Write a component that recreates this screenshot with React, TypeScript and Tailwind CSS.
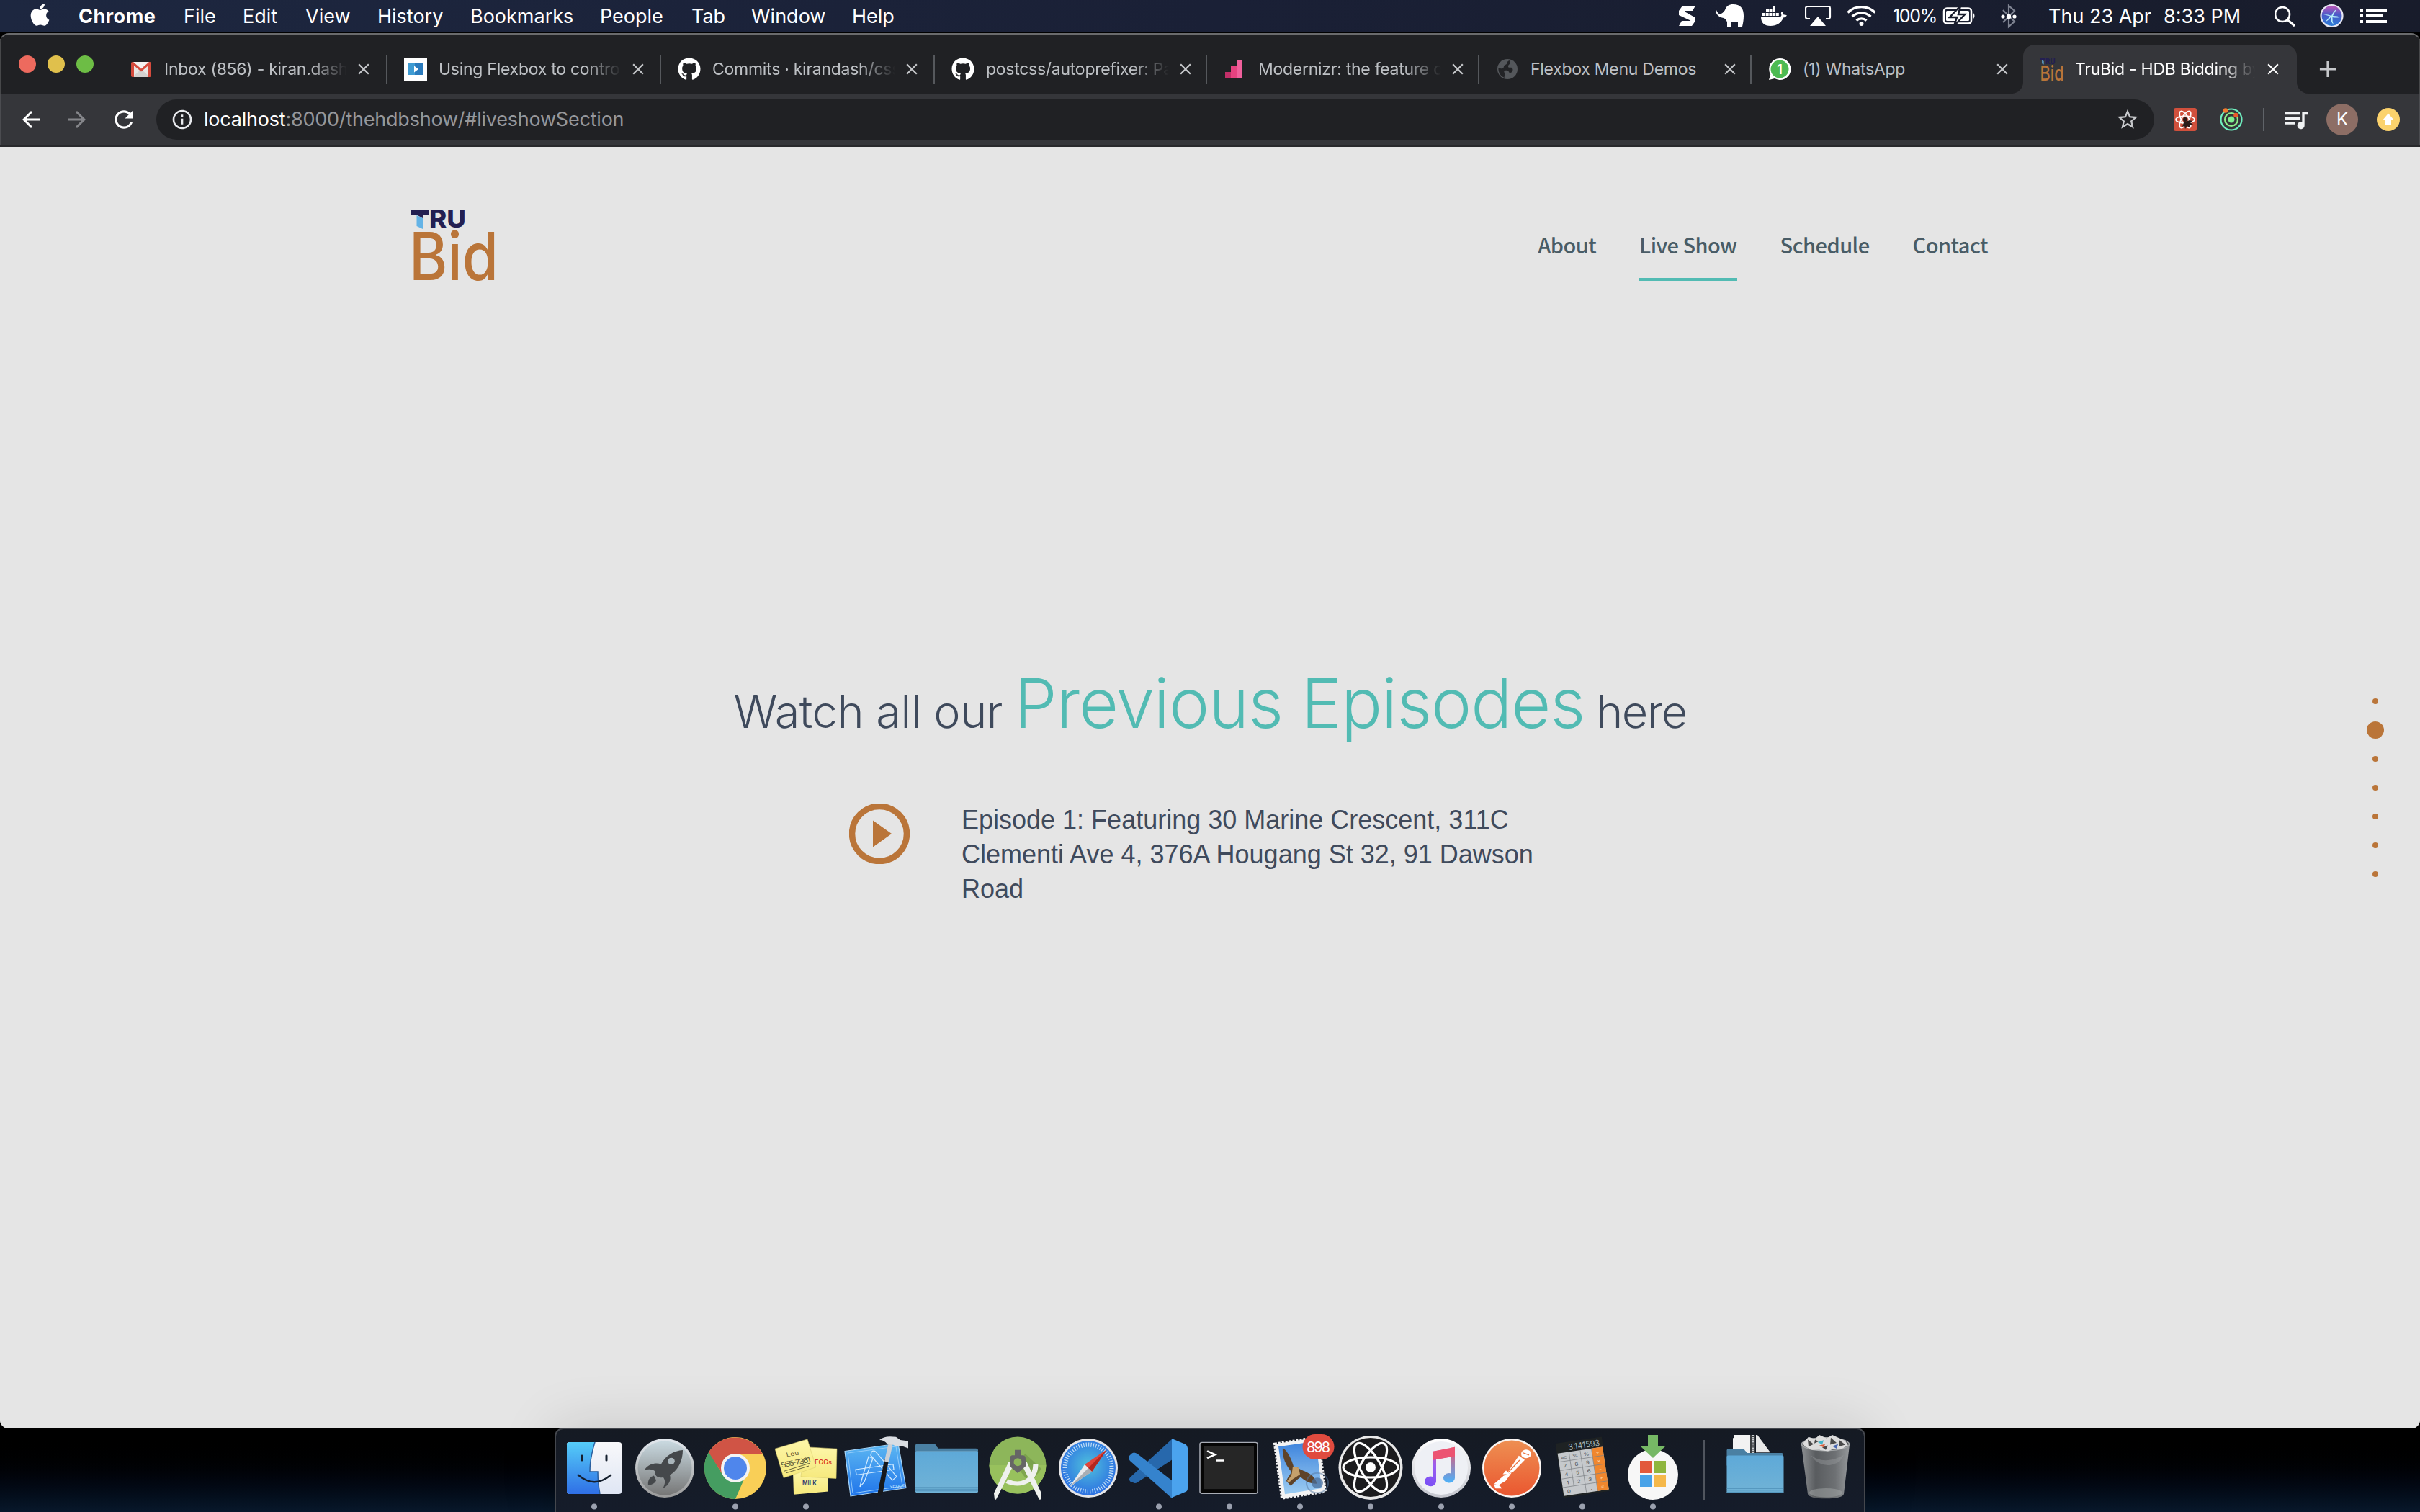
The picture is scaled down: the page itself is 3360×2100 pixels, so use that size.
import type { ReactNode } from 'react';
import { FaApple, FaGithub } from 'react-icons/fa';
import { MdArrowBack, MdArrowForward, MdClose, MdAdd, MdInfoOutline, MdQueueMusic, MdRefresh, MdStarBorder } from 'react-icons/md';

/* ---------- macOS menu bar ---------- */

const menus = [
  { label: 'Chrome', cls: 'w-[146px] font-bold tracking-[0.500px]' },
  { label: 'File', cls: 'w-[82px]' },
  { label: 'Edit', cls: 'w-[87px]' },
  { label: 'View', cls: 'w-[100px]' },
  { label: 'History', cls: 'w-[129px]' },
  { label: 'Bookmarks', cls: 'w-[180px]' },
  { label: 'People', cls: 'w-[127px]' },
  { label: 'Tab', cls: 'w-[83px]' },
  { label: 'Window', cls: 'w-[140px]' },
  { label: 'Help', cls: 'w-[80px]' },
];

function Glyph({ w, children }: { w: number; children: ReactNode }) {
  return (
    <svg width={w} height={44} viewBox={`0 0 ${w} 44`} className="shrink-0" fill="white">
      {children}
    </svg>
  );
}

function MenuBar() {
  return (
    <div className="flex h-11 shrink-0 items-center justify-between bg-linear-to-r from-[#1d2740] via-[#1a2036] to-[#181c2b] text-[27px] leading-none text-white">
      <div className="flex items-center">
        <FaApple className="-mt-1 mr-[25px] ml-9 size-[35px] w-12 pr-[9px]" />
        {menus.map((m) => (
          <span key={m.label} className={`shrink-0 whitespace-nowrap ${m.cls}`}>
            {m.label}
          </span>
        ))}
      </div>
      <div className="flex items-center">
        <Glyph w={51}>
          <path d="M5 8H23L19 15H9L5 19H0V15Z" />
          <path d="M0 15H6L22 24V29H17L0 21Z" />
          <path d="M17 26H23V29L18 36H0L4 29H16Z" />
        </Glyph>
        <Glyph w={63}>
          <path d="M1 14C5 24 10 18 13 14C15 8 19 6 24 6C36 6 39 13 39 22C39 28 38 32 37 37H31V30H22V37H16V31C15 28 14 26 11 25C5 24 0 20 0 14Z" />
        </Glyph>
        <Glyph w={61}>
          <path d="M16 8H20V12H16ZM7 13H11V17H7ZM11.500 13H15.500V17H11.500ZM16 13H20V17H16ZM2 18H6V22H2ZM6.700 18H10.700V22H6.700ZM11.400 18H15.400V22H11.400ZM16.100 18H20.100V22H16.100ZM20.800 18H24.800V22H20.800Z" />
          <path d="M0 23.500H25Q28 23.500 28.500 21Q27 18 29 16Q31.500 18 31.500 20.500Q34 20 36 21.500Q34.500 24 31 24.500C28 32 22 36 13 36C5 36 0 32 0 23.500Z" />
        </Glyph>
        <Glyph w={58}>
          <path d="M7 26H3.5A2.5 2.5 0 0 1 1 23.500V11.500A2.500 2.500 0 0 1 3.500 9H32.500A2.500 2.500 0 0 1 35 11.500V23.500A2.500 2.500 0 0 1 32.500 26H29" fill="none" stroke="white" strokeWidth="2.200" />
          <path d="M18 23L29 36H7Z" />
        </Glyph>
        <Glyph w={64}>
          <g fill="none" stroke="white" strokeWidth="3.200">
            <path d="M1.500 17.500A27 27 0 0 1 39.500 17.500" />
            <path d="M7.500 23A19 19 0 0 1 33.500 23" />
            <path d="M13.500 28.500A10.500 10.500 0 0 1 27.500 28.500" />
          </g>
          <circle cx="20.500" cy="33" r="3" />
        </Glyph>
        <span className="w-[69px] text-[25px] tracking-[-1.300px]">100%</span>
        <Glyph w={81}>
          <rect x="2" y="11.500" width="38" height="21" rx="4" fill="none" stroke="white" strokeWidth="2.500" />
          <rect x="5" y="15" width="32" height="14" rx="1.500" />
          <path d="M43 18Q46 22 43 26Z" />
          <path d="M25 8L10 24H20L16 36L31 20H22Z" stroke="#191d2d" strokeWidth="2.500" />
        </Glyph>
        <Glyph w={66}>
          <path d="M3 14L19 30L11 37V8L19 15L3 31" fill="none" stroke="#7e8391" strokeWidth="2.200" />
          <circle cx="3" cy="23" r="2.600" />
          <circle cx="11" cy="23" r="3.200" />
          <circle cx="19" cy="23" r="2.600" />
        </Glyph>
        <span className="w-[160px] whitespace-nowrap">Thu 23 Apr</span>
        <span className="w-[154px] whitespace-nowrap">8:33 PM</span>
        <Glyph w={63}>
          <g fill="none" stroke="white" strokeWidth="2.600">
            <circle cx="11" cy="20" r="10" />
            <path d="M18 27.500L28 36" strokeWidth="3.200" />
          </g>
        </Glyph>
        <Glyph w={56}>
          <defs>
            <linearGradient id="siri" x1="0" y1="0" x2="0" y2="1">
              <stop offset="0" stopColor="#c957b8" />
              <stop offset="0.450" stopColor="#4a5ac8" />
              <stop offset="1" stopColor="#2a7fd8" />
            </linearGradient>
          </defs>
          <circle cx="16.500" cy="22" r="15" fill="url(#siri)" stroke="#e6e6f2" strokeWidth="2.200" />
          <path d="M5 20Q12 20 16 22Q19 15 23 13Q20 18 18 22Q25 22 28 24Q21 25 17.500 24Q17 30 19 34Q14.500 30 15 24Q11 29 8 30Q11 26 14 22.500Z" fill="#b9f1fb" />
        </Glyph>
        <Glyph w={83}>
          <path d="M0 12H4V16H0ZM8 12H37V16H8ZM0 20H4V24H0ZM8 20H31V24H8ZM0 28H4V32H0ZM8 28H37V32H8ZM0 28Z" />
        </Glyph>
      </div>
    </div>
  );
}

/* ---------- tab favicons ---------- */

const Gmail = () => (
  <svg viewBox="0 0 32 32" className="size-8">
    <path d="M4 6H28V27H4Z" fill="#e9e7e5" />
    <path d="M4 27L16 16L28 27Z" fill="#d4d2d0" />
    <path d="M4 6L16 17L28 6" fill="#f4f2f1" />
    <path d="M2 8Q2 6 4 6H5L16 15.500L27 6H28Q30 6 30 8V25Q30 27 28 27H26V11L16 19.500L6 11V27H4Q2 27 2 25Z" fill="#d54b3d" />
  </svg>
);

const Flexplay = () => (
  <svg viewBox="0 0 32 32" className="size-8">
    <rect width="32" height="32" fill="white" />
    <rect x="5" y="8" width="22" height="16" fill="#2b7bbd" />
    <rect x="5" y="8" width="10" height="16" fill="#3f9bd2" />
    <path d="M14 11.500L20 16L14 20.500Z" fill="white" />
  </svg>
);

const Modernizr = () => (
  <svg viewBox="0 0 32 32" className="size-8">
    <path d="M2 20H10V28H2Z" fill="#c22f68" />
    <path d="M10 12H18V28H10Z" fill="#e64280" />
    <path d="M18 4H26V28H18Z" fill="#f0609c" />
  </svg>
);

const Globe = () => (
  <svg viewBox="0 0 32 32" className="size-8">
    <circle cx="16" cy="16" r="14" fill="#54575b" />
    <path d="M19 4C14 5 17 9 13 10C10 11 12 14 9 15C6 16 4 14 3.500 14C3 20 6 26 12 28C11 25 14 24 12 21C10 19 13 17 16 18C19 19 17 21 20 21C23 21 25 16 22 14C20 13 17 15 17 12C17 9 22 9 19 4Z" fill="#222326" />
  </svg>
);

const WhatsApp = () => (
  <div className="relative size-8">
    <svg viewBox="0 0 32 32" className="size-8">
      <path d="M16 1A15 15 0 1 1 9 29L1 31L3.200 23.500A15 15 0 0 1 16 1Z" fill="white" />
      <circle cx="16" cy="16" r="12.500" fill="#4dbb52" />
    </svg>
    <span className="absolute inset-0 flex items-center justify-center text-[18px] font-semibold text-white">1</span>
  </div>
);

const TruBidMini = () => (
  <svg viewBox="0 0 120 102" className="size-8" preserveAspectRatio="none">
    <LogoArt />
  </svg>
);

function LogoArt() {
  return (
    <>
      <path d="M8.500 11L17 15V30L8.500 26Z" fill="#64b3e6" />
      <path d="M0 3H25.500V10H17V15L8 10H0Z" fill="#231f52" />
      <text x="26" y="27.500" textLength="51" lengthAdjust="spacingAndGlyphs" fontSize="34" fontWeight="800" fill="#231f52">
        RU
      </text>
      <text x="-2" y="101" textLength="124" lengthAdjust="spacingAndGlyphs" fontSize="92" fontWeight="540" fill="#ba7539">
        Bid
      </text>
    </>
  );
}

/* ---------- Chrome window ---------- */

const tabs = [
  { title: 'Inbox (856) - kiran.dash', icon: <Gmail />, cls: 'w-[381px]', fade: true },
  { title: 'Using Flexbox to contro', icon: <Flexplay />, cls: 'w-[380px]', fade: true },
  { title: 'Commits · kirandash/css', icon: <FaGithub className="size-8 text-white" />, cls: 'w-[380px]', fade: true },
  { title: 'postcss/autoprefixer: Pa', icon: <FaGithub className="size-8 text-white" />, cls: 'w-[378px]', fade: true },
  { title: 'Modernizr: the feature d', icon: <Modernizr />, cls: 'w-[378px]', fade: true },
  { title: 'Flexbox Menu Demos', icon: <Globe />, cls: 'w-[378px]', fade: false },
  { title: '(1) WhatsApp', icon: <WhatsApp />, cls: 'w-[377px]', fade: false },
];

const fadeMask = '[mask-image:linear-gradient(to_right,black_80%,transparent)]';

function TabStrip() {
  return (
    <div className="flex h-[82px] shrink-0 items-end bg-[#202124] shadow-[inset_2px_0_#47484a,inset_-2px_0_#47484a]">
      <div className="flex h-full w-[157px] shrink-0 items-center gap-4 pl-[26px]">
        <span className="size-6 rounded-full bg-[#ed6a5e]" />
        <span className="size-6 rounded-full bg-[#e0c04c]" />
        <span className="size-6 rounded-full bg-[#6dbd45]" />
      </div>
      {tabs.map((t, i) => (
        <div key={i} className={`flex h-[68px] shrink-0 items-center pl-[23px] ${t.cls}`}>
          <span className="mr-4 size-8 shrink-0">{t.icon}</span>
          <span className={`w-[254px] shrink-0 overflow-hidden text-[23px] tracking-[-0.270px] whitespace-nowrap text-[#bdc0c4] ${t.fade ? fadeMask : ''}`}>
            {t.title}
          </span>
          <MdClose className="ml-[10px] size-[26px] shrink-0 text-[#c6c8cb]" />
          <span className={`ml-auto h-10 w-0.5 ${i < 6 ? 'bg-[#55585c]' : ''}`} />
        </div>
      ))}
      <div className="-mx-4 flex h-[68px] shrink-0 items-end">
        <svg viewBox="0 0 16 16" className="size-4">
          <path d="M16 0V16H0A16 16 0 0 0 16 0Z" fill="#35363a" />
        </svg>
        <div className="flex h-full w-[380px] items-center rounded-t-2xl bg-[#35363a] pl-6">
          <span className="mr-4 size-8 shrink-0">
            <TruBidMini />
          </span>
          <span className={`w-[250px] shrink-0 overflow-hidden text-[23px] tracking-[-0.270px] whitespace-nowrap text-white ${fadeMask}`}>
            TruBid - HDB Bidding by
          </span>
          <MdClose className="ml-3 size-[26px] shrink-0 text-white" />
        </div>
        <svg viewBox="0 0 16 16" className="size-4">
          <path d="M0 0V16H16A16 16 0 0 1 0 0Z" fill="#35363a" />
        </svg>
      </div>
      <div className="flex h-[68px] items-center pl-6">
        <MdAdd className="size-[38px] text-[#c6c8cb]" />
      </div>
    </div>
  );
}

function Toolbar() {
  return (
    <div className="flex h-[74px] shrink-0 items-center border-b-2 border-[#28292c] bg-[#35363a] shadow-[inset_2px_0_#4b4c50,inset_-2px_0_#4b4c50]">
      <div className="flex w-[217px] shrink-0 items-center pl-[25px]">
        <MdArrowBack className="mr-7 size-9 text-white" />
        <MdArrowForward className="mr-7 size-9 text-[#85868a]" />
        <MdRefresh className="size-[38px] text-white" />
      </div>
      <div className="flex h-14 w-[2774px] shrink-0 items-center rounded-full bg-[#202124] pl-5">
        <MdInfoOutline className="mr-[14px] size-8 text-[#e8eaed]" />
        <span className="text-[27px] tracking-[-0.220px] text-[#95979b]">
          <span className="text-white">localhost</span>:8000/thehdbshow/#liveshowSection
        </span>
        <MdStarBorder className="mr-5 ml-auto size-[34px] text-[#c6c8cb]" />
      </div>
      <svg viewBox="0 0 32 32" className="ml-[27px] size-8 shrink-0">
        <rect width="32" height="32" rx="3" fill="#d0503c" />
        <g fill="none" stroke="white" strokeWidth="1.700">
          <ellipse cx="16" cy="16" rx="13" ry="5" />
          <ellipse cx="16" cy="16" rx="13" ry="5" transform="rotate(60 16 16)" />
          <ellipse cx="16" cy="16" rx="13" ry="5" transform="rotate(120 16 16)" />
        </g>
        <circle cx="16" cy="16" r="3" fill="#2a1a18" />
        <path d="M14 20L22 17L26 18L23 20L27 23L22 23L23 28L19 25L16 29L15 25L12 26Z" fill="#2a1a18" />
      </svg>
      <svg viewBox="0 0 32 32" className="ml-8 size-8 shrink-0">
        <g fill="none" strokeWidth="2.200">
          <circle cx="16" cy="16" r="14.500" stroke="#6ff0c0" />
          <circle cx="16" cy="16" r="9" stroke="#8bf08a" />
        </g>
        <circle cx="16" cy="16" r="4.500" fill="#7df08f" />
        <circle cx="8" cy="3.500" r="3.300" fill="#ef7a2e" />
        <circle cx="22.500" cy="10" r="3.300" fill="#ea5a2a" />
      </svg>
      <span className="mr-6 ml-7 h-8 w-0.5 shrink-0 bg-[#5f6368]" />
      <MdQueueMusic className="size-10 shrink-0 text-[#f1f3f4]" />
      <span className="ml-[22px] flex size-11 shrink-0 items-center justify-center rounded-full bg-[#8d6e65] text-[24px] text-white">K</span>
      <svg viewBox="0 0 32 32" className="ml-[26px] size-8 shrink-0">
        <circle cx="16" cy="16" r="16" fill="#fbd26c" />
        <path d="M16 7.500L24 17H20V24H12V17H8Z" fill="white" />
      </svg>
    </div>
  );
}

/* ---------- page ---------- */

const links = ['About', 'Live Show', 'Schedule', 'Contact'];

function Page() {
  return (
    <main className="relative flex-1 bg-[#e5e5e5]">
      <header className="ml-[570px] flex w-[2190px] items-start justify-between pt-[84px]">
        <svg width="120" height="102" viewBox="0 0 120 102" className="overflow-visible">
          <LogoArt />
        </svg>
        <nav className="flex gap-[60px] font-['Noto_Sans_CJK_SC'] text-[29px] leading-none font-medium tracking-[-0.550px] text-[#495c66]">
          {links.map((l) => (
            <a key={l} className={`flex h-[102px] items-center border-b-4 pt-1 ${l === 'Live Show' ? 'border-[#52bbb3]' : 'border-transparent'}`}>
              {l}
            </a>
          ))}
        </nav>
      </header>

      <section className="pt-[515px]">
        <h1 className="flex items-baseline justify-center gap-4 text-[63px] leading-[144px] font-[280] whitespace-nowrap text-[#3f4a5c]">
          <span className="tracking-[-0.450px]">Watch all our</span>
          <span className="text-[95px] tracking-[-1.100px] text-[#52bbb3]">Previous Episodes</span>
          <span className="tracking-[-1.600px]">here</span>
        </h1>
        <div className="mt-[55px] ml-[1179px] flex items-start">
          <svg viewBox="0 0 84 84" className="mt-px size-[84px]">
            <circle cx="42" cy="42" r="38" fill="none" stroke="#ba7539" strokeWidth="8.500" />
            <path d="M33 23.500L59 42L33 60.500Z" fill="#ba7539" />
          </svg>
          <p className="ml-[72px] w-[830px] font-['Liberation_Sans'] text-[36px] leading-[48px] text-[#3f4a5c]">
            Episode 1: Featuring 30 Marine Crescent, 311C Clementi Ave 4, 376A Hougang St 32, 91 Dawson Road
          </p>
        </div>
      </section>

      <div className="absolute top-[750px] right-[50px] flex w-6 flex-col items-center">
        {[0, 1, 2, 3, 4, 5, 6].map((n) => (
          <span key={n} className="flex h-10 items-center">
            <span className={`rounded-full bg-[#ba7539] ${n === 1 ? 'size-6' : 'size-2'}`} />
          </span>
        ))}
      </div>
    </main>
  );
}

/* ---------- dock ---------- */

const Grad = ({ id, a, b }: { id: string; a: string; b: string }) => (
  <linearGradient id={id} x1="0" y1="0" x2="0" y2="1">
    <stop offset="0" stopColor={a} />
    <stop offset="1" stopColor={b} />
  </linearGradient>
);

const Fit = ({ dy, k, children }: { dy: number; k: number; children: ReactNode }) => (
  <g transform={`translate(0 ${dy}) scale(1 ${k})`}>{children}</g>
);

const Finder = (
  <Fit dy={3.400} k={0.818}>
    <defs><Grad id="fi" a="#55cdf8" b="#2f6fe6" /><Grad id="fw" a="#f8f8fa" b="#dfe6f4" /></defs>
    <rect x="11" y="19" width="76" height="88" rx="4" fill="url(#fw)" />
    <path d="M15 19H50C46 35 43 52 43 69H54C54 82 55 95 57 107H15Q11 107 11 103V23Q11 19 15 19Z" fill="url(#fi)" />
    <path d="M50 19C46 35 43 52 43 69H54C54 82 55 95 57 107" fill="none" stroke="#2a5f9e" strokeWidth="1.500" />
    <path d="M32 42V50M66 42V50M27 75Q49 98 72 75" fill="none" stroke="#15202e" strokeWidth="3" strokeLinecap="round" />
  </Fit>
);

const Launchpad = (
  <>
    <defs><Grad id="lp" a="#c9d9e0" b="#777777" /><Grad id="lr" a="#e2e8ee" b="#9a9a9a" /></defs>
    <circle cx="49" cy="55" r="41" fill="url(#lr)" />
    <circle cx="49" cy="55" r="37.500" fill="url(#lp)" />
    <Fit dy={10.500} k={0.810}>
      <path d="M74 24C62 25 50 33 44 48C35 45 26 48 21 58C28 56 33 57 36 61C35 65 36 68 39 70C43 72 46 71 47 71C50 76 50 82 46 90C55 84 58 76 56 67C68 58 74 42 74 24ZM34 68C28 70 25 77 26 84C32 84 36 80 37 76Z" fill="#45484b" />
      <ellipse cx="58" cy="43" rx="4.800" ry="5.800" fill="#a9b5bb" />
    </Fit>
  </>
);

const Chrome = (
  <>
    <circle cx="49" cy="55" r="43" fill="#f9cf57" />
    <path d="M49 98A43 43 0 0 1 12.500 32L31 64A20 20 0 0 0 63 66Z" fill="#459d61" />
    <path d="M12 33A43 43 0 0 1 86.500 35H49L30 62Z" fill="#d05445" />
    <circle cx="49" cy="55" r="20" fill="#f4f4f4" />
    <circle cx="49" cy="55" r="16" fill="#4f86ec" />
  </>
);

const Stickies = (
  <Fit dy={3.400} k={0.825}>
    <defs><Grad id="st" a="#fdf6a8" b="#f6e97d" /></defs>
    <path d="M31 66L80 66L80 102L32 107Z" fill="url(#st)" />
    <path d="M47 27L92 30L91 80L42 77Z" fill="url(#st)" stroke="#d6ca6c" strokeWidth="0.600" />
    <path d="M6 30L51 14L63 61L18 79Z" fill="url(#st)" stroke="#d6ca6c" strokeWidth="0.600" />
    <g fontFamily="Inter" fontSize="12">
      <text x="22" y="42" transform="rotate(-12 30 40)" fill="#5b5836" fontSize="10">Lou</text>
      <text x="14" y="57" transform="rotate(-14 36 54)" fill="#5b5836" textLength="42">555-7361</text>
      <text x="61" y="57" fill="#d8382a" fontWeight="600" fontSize="11" textLength="24" lengthAdjust="spacingAndGlyphs">EGGs</text>
      <text x="44" y="92" fill="#2d3a6e" fontWeight="600" fontSize="11" textLength="20" lengthAdjust="spacingAndGlyphs">MILK</text>
    </g>
    <path d="M18 68L55 54M21 71L53 59" stroke="#5b5836" strokeWidth="1" />
  </Fit>
);

const Xcode = (
  <Fit dy={2.800} k={0.822}>
    <defs><Grad id="xc" a="#5db8f2" b="#1f74ea" /></defs>
    <path d="M5 35L79 22L90 97L13 111Z" fill="url(#xc)" stroke="#a9d6f8" strokeWidth="1.200" />
    <path d="M9 38L76 27L85 94L16 106Z" fill="none" stroke="#9cd0fa" strokeWidth="1" />
    <path d="M20 66L72 57L73 66L21 75ZM38 44L28 85L26 95L32 87L44 47ZM42 36Q45 33 48 36L77 78L71 84L41 42Z" fill="none" stroke="#d2ebff" strokeWidth="1.300" />
    <text x="68" y="98" transform="rotate(-9 68 98)" fontSize="6" fill="#d2ebff">XCODE</text>
    <path d="M66 50L58 104Q54 114 50 109L60 49Z" fill="#17191d" />
    <path d="M72 20L66 54L60 52L66 20Z" fill="#ccd0d6" />
    <path d="M53 16Q60 8 76 11L82 16L93 18V30L84 26L76 27L72 24L64 23Q60 16 53 16Z" fill="#dadde2" />
  </Fit>
);

const Folder = (
  <Fit dy={3.200} k={0.819}>
    <defs><Grad id="fo" a="#5ea9d8" b="#71b3d6" /></defs>
    <path d="M5 25Q5 22 8 22H30Q33 22 34 26L37 30H89Q92 30 92 33V60H5Z" fill="#4a80a3" />
    <rect x="5" y="35" width="87" height="70" rx="2" fill="url(#fo)" />
    <path d="M5 96H92M5 99H92M5 102H92" stroke="#4f90b8" strokeWidth="1" />
    <path d="M6 35.500H91" stroke="#97cdec" strokeWidth="1.500" />
  </Fit>
);

const AndroidStudio = (
  <>
    <circle cx="49" cy="51" r="39.500" fill="#8db65a" />
    <path d="M9.500 51A39.500 39.500 0 0 0 88.500 51Z" fill="#98c15d" />
    <Fit dy={5} k={0.850}>
      <path d="M59 35L82 60L66 84L50 60Z" fill="#6f9445" opacity="0.600" />
      <path d="M34 80Q49 88 62 80Q74 71 74 52" fill="none" stroke="#eff1ee" strokeWidth="7" />
      <path d="M42 54L24 96L18 110L17 100L37 50ZM56 54L74 96L80 110L81 100L61 50Z" fill="#eff1ee" stroke="#eff1ee" strokeWidth="2" />
      <path d="M45 29H53V38H57Q60 39 60 44V56L49 67L38 56V44Q38 39 41 38H45Z" fill="#666666" />
      <ellipse cx="49" cy="49" rx="5.500" ry="6.500" fill="#8db65a" />
    </Fit>
  </>
);

const Safari = (
  <>
    <defs><radialGradient id="sa" cx="0.500" cy="0.450" r="0.550"><stop offset="0" stopColor="#4fc0dc" /><stop offset="1" stopColor="#2c70e2" /></radialGradient></defs>
    <circle cx="49" cy="55" r="41" fill="#e6e6e8" />
    <circle cx="49" cy="55" r="38" fill="url(#sa)" />
    <circle cx="49" cy="55" r="32.500" fill="none" stroke="#d2e9fb" strokeWidth="6" strokeDasharray="1.200 2.200" opacity="0.900" />
    <path d="M75 29L54 60L44 50Z" fill="#e0453a" />
    <path d="M23 81L44 50L54 60Z" fill="#e9ebee" />
    <path d="M75 29L54 60L49 55Z" fill="#b3271f" />
    <path d="M23 81L54 60L49 55Z" fill="#a9aeb4" />
  </>
);

const VSCode = (
  <>
    <path d="M11 75Q6 72 9 68L68 14V43L19 75Q16 77 13 75Z" fill="#2768ac" />
    <path d="M11 35Q14 32 19 35L68 73V96L66 96L9 45Q6 42 8 38Z" fill="#3583cd" />
    <path d="M67 14L86 22Q89 24 89 27V83Q89 87 86 88L67 96Z" fill="#4ba3ee" />
  </>
);

const Terminal = (
  <Fit dy={3.200} k={0.826}>
    <rect x="8" y="19.500" width="80" height="86" rx="3" fill="#050505" stroke="#a9adb6" strokeWidth="1.500" />
    <rect x="13" y="26" width="70" height="72" fill="#262626" />
    <path d="M18 34L29 40L18 46" fill="none" stroke="white" strokeWidth="3" />
    <path d="M30 50H41" stroke="white" strokeWidth="3" />
  </Fit>
);

const Mail = (
  <>
    <Fit dy={-8} k={0.920}>
      <defs><Grad id="ma" a="#3b82dc" b="#9dcdf2" /></defs>
      <path d="M14 32L74 22L84 104L24 114Z" fill="#f3f3f3" stroke="#f3f3f3" strokeWidth="4" strokeDasharray="3 2" />
      <path d="M19 36L71 28L79 99L28 108Z" fill="url(#ma)" />
      <path d="M25 38C29 40 36 50 40 66L46 68C50 72 56 72 66 80C70 86 72 88 72 92C62 92 56 88 50 82C44 86 40 92 36 95L30 88C32 82 36 78 37 74C29 64 24 52 25 38Z" fill="#5e4328" />
      <path d="M39 66L47 68L49 78L38 86Q34 92 31 88Q38 80 38 74Z" fill="#c4a06c" />
      <circle cx="73" cy="91" r="15" fill="none" stroke="#5577a0" strokeWidth="2" opacity="0.500" />
      <circle cx="73" cy="91" r="8" fill="#4a6f9c" opacity="0.750" />
    </Fit>
    <rect x="52.500" y="8" width="44" height="35" rx="17.500" fill="#e04b3f" />
    <text x="74.500" y="33" textAnchor="middle" fontSize="20" textLength="33" fill="white">898</text>
  </>
);

const Electron = (
  <>
    <circle cx="49" cy="54.500" r="44.500" fill="#e8e8e8" />
    <circle cx="49" cy="54" r="41" fill="#1c1c1e" />
    <g fill="none" stroke="white" strokeWidth="3.200">
      <ellipse cx="49" cy="54" rx="38" ry="14" />
      <ellipse cx="49" cy="54" rx="38" ry="14" transform="rotate(60 49 54)" />
      <ellipse cx="49" cy="54" rx="38" ry="14" transform="rotate(120 49 54)" />
    </g>
    <circle cx="49" cy="54" r="7" fill="white" />
  </>
);

const Music = (
  <>
    <defs><Grad id="mr" a="#ffffff" b="#c4c6ce" /><linearGradient id="mn" x1="0.800" y1="0" x2="0.200" y2="1"><stop offset="0" stopColor="#ef4e6a" /><stop offset="0.550" stopColor="#9a5ef0" /><stop offset="1" stopColor="#7b50f5" /></linearGradient><Grad id="mb" a="#f0506c" b="#4ab2fa" /></defs>
    <circle cx="49" cy="55" r="41" fill="url(#mr)" />
    <circle cx="49" cy="55" r="37" fill="#eef0f5" />
    <Fit dy={8} k={0.850}>
      <path d="M38 28L68 22V36L42 41V77A8 8 0 1 1 38 70Z" fill="url(#mn)" />
      <path d="M63 22L68 21V71A8 8 0 1 1 63 64Z" fill="url(#mb)" />
      <path d="M38 28L68 21V36L38 42Z" fill="#ec5472" />
    </Fit>
  </>
);

const Postman = (
  <>
    <defs><Grad id="po" a="#ee8f52" b="#ea5730" /></defs>
    <circle cx="49" cy="55" r="41" fill="#faf5f2" />
    <circle cx="49" cy="55" r="38.500" fill="url(#po)" />
    <Fit dy={6} k={0.860}>
      <circle cx="69" cy="34" r="7" fill="white" />
      <path d="M59 38L66 44L51 62L43 66Z M41 62L38 66L44 66Z M47 66L40 77L30 84L26 82L38 70Z M25 84L32 86L34 89H27Z" fill="white" stroke="white" strokeWidth="1.500" />
      <path d="M44 64L60 44M64 32L73 36" stroke="#ea7442" strokeWidth="1.500" />
    </Fit>
  </>
);

const keys = ['AC', '%', '%', '÷', '7', '8', '9', '×', '4', '5', '6', '−', '1', '2', '3', '+', '0', '', '.', '='];

const Calculator = (
  <g transform="translate(13 24) rotate(-8.500) scale(1 0.785)">
    <rect x="-1" y="-4" width="65" height="97" fill="#1e2223" />
    <rect x="0" y="14" width="63" height="76" fill="#c6c9cc" />
    <rect x="47.500" y="14" width="15.500" height="76" fill="#f0872e" />
    <text x="60" y="11" textAnchor="end" fontSize="15" fill="#a8b4b4" textLength="44" lengthAdjust="spacingAndGlyphs">3.141593</text>
    {keys.map((k, i) => (
      <text key={i} x={8 + (i % 4) * 15.7} y={25 + Math.floor(i / 4) * 15.2} textAnchor="middle" fontSize={i === 0 ? 6 : 8} fill={i % 4 === 3 ? '#fbd6ae' : '#4c4f52'}>
        {k}
      </text>
    ))}
    <path d="M0 29.200H63M0 44.400H63M0 59.600H63M0 74.800H63M15.800 14V74.800M31.600 14V90M47.400 14V90" stroke="#7d8185" strokeWidth="0.800" />
  </g>
);

const Downloader = (
  <>
    <circle cx="49" cy="64" r="35" fill="#f7f7f7" />
    <path d="M31 45H48V62H31Z" fill="#e2593c" />
    <path d="M50 45H67V62H50Z" fill="#8fb63e" />
    <path d="M31 64H48V81H31Z" fill="#48a2e8" />
    <path d="M50 64H67V81H50Z" fill="#f5b84a" />
    <path d="M42 9H56V24H67L49 41L31 24H42Z" fill="#76b865" />
  </>
);

const ZipFolder = (
  <Fit dy={1.500} k={0.835}>
    <path d="M20 9H42V40H18V14H20Z" fill="#f2f2f2" />
    <path d="M50 9H52L70 38H50Z" fill="#e8e8e8" />
    <path d="M41 9V40" stroke="#f2f2f2" strokeWidth="2" />
    <path d="M45.500 9V40" stroke="#3a3d40" strokeWidth="7" />
    <path d="M45.500 9V40" stroke="#c9ccd0" strokeWidth="3" strokeDasharray="2 1.500" />
    <path d="M9.500 34Q9.500 32 12 32H32Q34 32 35 35L38 39H86Q88 39 88 42V60H9.500Z" fill="#4a80a3" />
    <rect x="9.500" y="43" width="79" height="63" rx="2" fill="url(#fo)" />
    <path d="M9.500 98H88M9.500 101H88M9.500 104H88" stroke="#4f90b8" strokeWidth="1" />
  </Fit>
);

const Trash = (
  <Fit dy={1} k={0.900}>
    <defs><linearGradient id="tr" x1="0" x2="1" y1="0" y2="0"><stop offset="0" stopColor="#8c8f92" /><stop offset="0.300" stopColor="#595c5f" /><stop offset="0.700" stopColor="#6d7073" /><stop offset="1" stopColor="#96999c" /></linearGradient></defs>
    <path d="M15 24Q49 38 82 24L74 100Q72 107 49 107Q26 107 24 100Z" fill="url(#tr)" />
    <ellipse cx="48.500" cy="23" rx="33" ry="10" fill="#4c4f52" stroke="#a6a9ab" strokeWidth="1.500" />
    <path d="M17 22L25 12L34 15L40 9L50 14L58 9L68 14L76 18L80 25L70 31L60 30L52 34L40 32L30 32L20 27Z" fill="#dcdcdc" />
    <path d="M24 16L32 23L25 27ZM56 13L64 21L55 24ZM44 28L52 25L49 32ZM68 17L76 24L67 27ZM34 16L39 19L33 22Z" fill="#4a4a4a" />
    <path d="M38 20L46 17L44 24Z" fill="#43b5c9" />
    <path d="M40 25L48 23L46 28Z" fill="#d65f3b" />
    <path d="M58 26L66 23L64 30Z" fill="#4967b1" />
    <path d="M28 40Q46 56 74 40L68 50Q50 62 34 48Z" fill="#a3a6a8" opacity="0.350" />
    <ellipse cx="49" cy="98" rx="23" ry="7" fill="#a9acae" opacity="0.450" />
  </Fit>
);

const apps: { art: ReactNode; running: boolean }[] = [
  { art: Finder, running: true },
  { art: Launchpad, running: false },
  { art: Chrome, running: true },
  { art: Stickies, running: true },
  { art: Xcode, running: false },
  { art: Folder, running: false },
  { art: AndroidStudio, running: false },
  { art: Safari, running: false },
  { art: VSCode, running: true },
  { art: Terminal, running: true },
  { art: Mail, running: true },
  { art: Electron, running: true },
  { art: Music, running: true },
  { art: Postman, running: true },
  { art: Calculator, running: true },
  { art: Downloader, running: true },
];

function DockItem({ children, running }: { children: ReactNode; running?: boolean }) {
  return (
    <svg width="98" height="116" viewBox="0 1 98 116" className="shrink-0">
      {children}
      {running && <circle cx="49" cy="108.500" r="4" fill="#9aa0ae" />}
    </svg>
  );
}

function Dock() {
  return (
    <div className="absolute bottom-0 left-[770px] flex h-[117px] w-[1820px] rounded-t-xl border-x-2 border-t-2 border-[#44474d] bg-linear-to-b from-[#151a23] to-[#151c2a] pl-1 shadow-[0_0_80px_rgba(0,0,0,0.140)]">
      {apps.map((a, i) => (
        <DockItem key={i} running={a.running}>
          {a.art}
        </DockItem>
      ))}
      <div className="flex w-[44px] shrink-0 justify-center pt-[15px]">
        <span className="h-[84px] w-0.5 bg-[#50555e]" />
      </div>
      <DockItem>{ZipFolder}</DockItem>
      <DockItem>{Trash}</DockItem>
    </div>
  );
}

export default function App() {
  return (
    <div className="relative flex h-[2100px] w-[3360px] flex-col overflow-hidden bg-linear-to-b from-black from-[95%] to-[#08182b] font-['Inter',sans-serif]">
      <MenuBar />
      <div className="mt-0.5 flex h-[1938px] shrink-0 flex-col overflow-hidden rounded-[12px] border-t-2 border-t-[#6a6b6d] bg-[#e5e5e5]">
        <TabStrip />
        <Toolbar />
        <Page />
      </div>
      <Dock />
    </div>
  );
}
